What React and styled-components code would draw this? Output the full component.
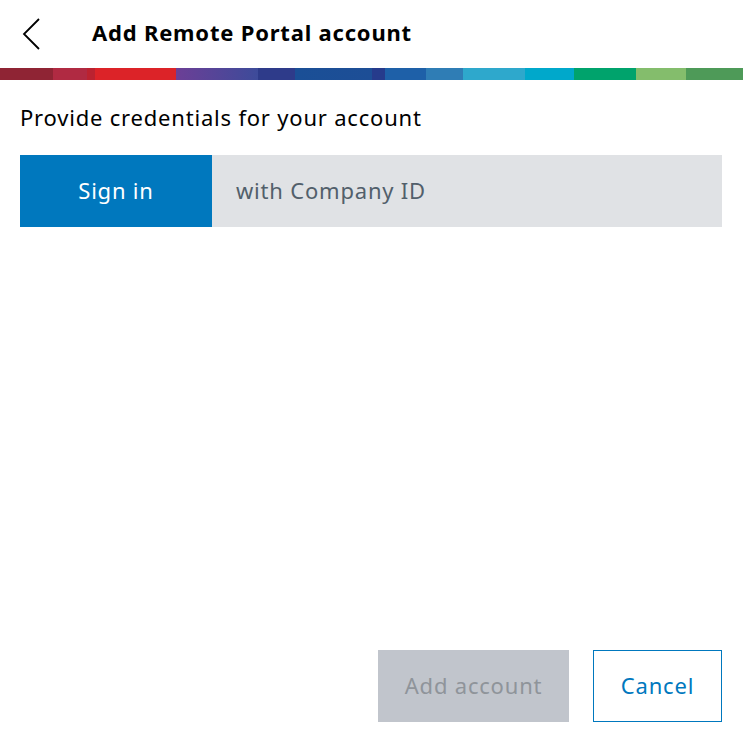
import React, { Component } from 'react'
import styled, { createGlobalStyle } from 'styled-components'

const GlobalStyle = createGlobalStyle`
    html, body {
        margin: 0;
        padding: 0;
        background: #ffffff;
    }
    body {
        font-family: "Noto Sans", "Open Sans", sans-serif;
        color: #000000;
        letter-spacing: 0.8px;
    }
`

const Page = styled.div`
    width: 743px;
    height: 739px;
    display: flex;
    flex-direction: column;
    overflow: hidden;
`

const Header = styled.header`
    height: 68px;
    display: flex;
    align-items: center;
    padding-left: 20px;
    gap: 50px;
`

const BackButton = styled.button`
    width: 22px;
    height: 36px;
    padding: 0;
    border: 0;
    background: none;
    display: flex;
    align-items: center;
    justify-content: center;
    cursor: pointer;
`

const Title = styled.h1`
    margin: 0 0 4px;
    font-size: 22px;
    font-weight: 700;
    letter-spacing: 0.8px;
`

const SuperGraphic = styled.div`
    height: 12px;
    background: linear-gradient(
        90deg,
        #8f2434 0px, #8f2434 53px,
        #b02a42 53px, #b02a42 87px,
        #bb2230 87px, #bb2230 95px,
        #dc2328 95px, #dc2328 176px,
        #6c3f96 176px, #3d4b9a 258px,
        #2e3b8a 258px, #2e3b8a 295px,
        #1a4f96 295px, #1d4e96 372px,
        #263b8c 372px, #263b8c 385px,
        #1e60a8 385px, #1e60a8 426px,
        #2f7db5 426px, #2f7db5 463px,
        #2ea8cc 463px, #2ea8cc 525px,
        #00a8cb 525px, #00a8cb 574px,
        #00a36c 574px, #00a36c 636px,
        #84bd6c 636px, #84bd6c 686px,
        #4e9a58 686px, #4e9a58 743px
    );
`

const Content = styled.main`
    flex: 1;
    display: flex;
    flex-direction: column;
    padding: 0 21px 17px 20px;
`

const Prompt = styled.p`
    margin: 23px 0 0;
    font-size: 22px;
    line-height: 28px;
`

const Tabs = styled.div`
    display: flex;
    height: 72px;
    margin-top: 24px;
    background: #e0e2e5;
`

const Tab = styled.button`
    border: 0;
    margin: 0;
    font-family: inherit;
    font-size: 22px;
    letter-spacing: inherit;
    cursor: pointer;
    display: flex;
    align-items: center;
    background: ${p => (p.$active ? '#0078be' : 'transparent')};
    color: ${p => (p.$active ? '#ffffff' : '#525f6b')};
    width: ${p => (p.$active ? '192px' : 'auto')};
    justify-content: ${p => (p.$active ? 'center' : 'flex-start')};
    padding: ${p => (p.$active ? '0 0 3px' : '0 24px 3px')};
`

const Spacer = styled.div`
    flex: 1;
`

const Actions = styled.div`
    display: flex;
    justify-content: flex-end;
    gap: 24px;
`

const ActionButton = styled.button`
    height: 72px;
    margin: 0;
    font-family: inherit;
    font-size: 22px;
    letter-spacing: inherit;
    box-sizing: border-box;
    padding: 0 0 2px;
    width: ${p => p.$width}px;
    background: ${p => (p.$primary ? '#c1c5cc' : '#ffffff')};
    color: ${p => (p.$primary ? '#8f949a' : '#0078be')};
    border: ${p => (p.$primary ? '0' : '1px solid #0078be')};
    cursor: ${p => (p.$primary ? 'default' : 'pointer')};
`

export class App extends Component {
    render() {
        return (
            <Page>
                <GlobalStyle />
                <Header>
                    <BackButton aria-label="Back">
                        <svg width="20" height="34" viewBox="0 0 20 34">
                            <path d="M18 2 L3 17 L18 32" fill="none" stroke="#000" strokeWidth="1.8" />
                        </svg>
                    </BackButton>
                    <Title>Add Remote Portal account</Title>
                </Header>
                <SuperGraphic />
                <Content>
                    <Prompt>Provide credentials for your account</Prompt>
                    <Tabs>
                        <Tab $active>Sign in</Tab>
                        <Tab>with Company ID</Tab>
                    </Tabs>
                    <Spacer />
                    <Actions>
                        <ActionButton $primary disabled $width={191}>Add account</ActionButton>
                        <ActionButton $width={129}>Cancel</ActionButton>
                    </Actions>
                </Content>
            </Page>
        )
    }
}

export default App
